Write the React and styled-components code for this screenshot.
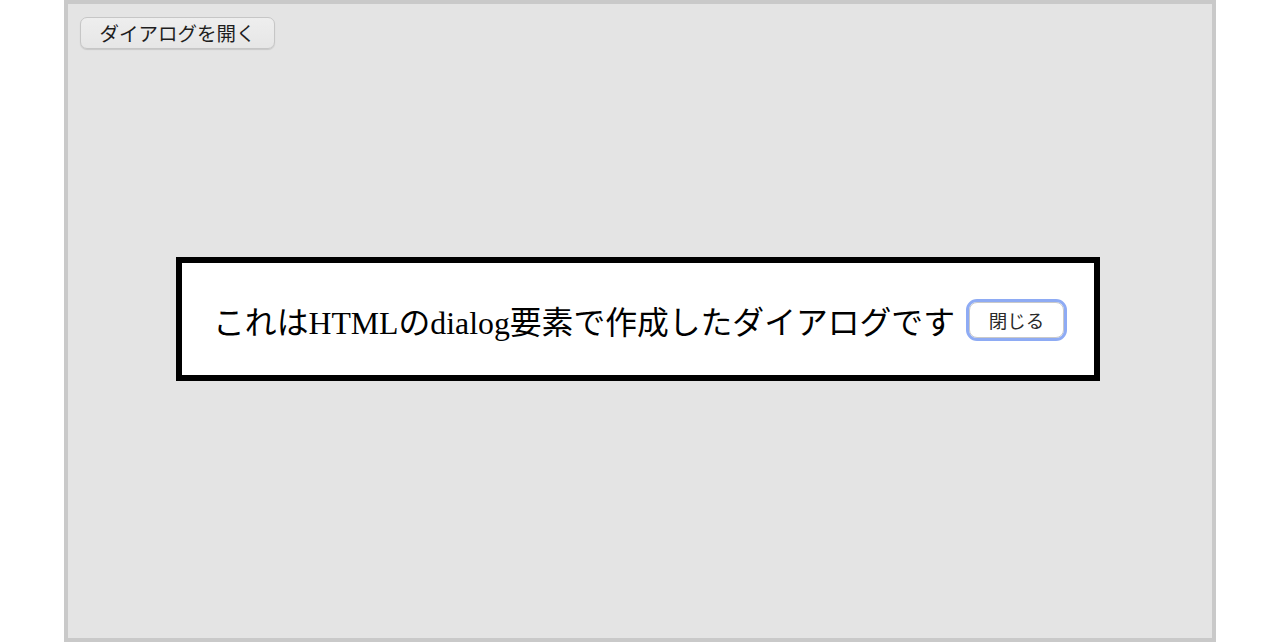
import React from 'react';
import styled, { createGlobalStyle } from 'styled-components';

const GlobalStyle = createGlobalStyle`
  html, body {
    margin: 0;
    padding: 0;
    background: #fff;
  }
  body {
    font-family: "Liberation Serif", "Noto Sans CJK JP", serif;
  }
`

const Frame = styled.div`
  position: relative;
  box-sizing: border-box;
  width: 1152px;
  height: 642px;
  margin: 0 auto;
  border: 4px solid #c9c9c9;
  background: #e4e4e4;
  padding: 13px 12px;
`

const OpenButton = styled.button`
  box-sizing: border-box;
  height: 32px;
  padding: 0 18.5px;
  border: 1px solid #c6c6c6;
  border-radius: 7px;
  background: linear-gradient(#eeeeee, #e6e6e6);
  box-shadow: 0 1px 1px rgba(0, 0, 0, 0.12);
  font-family: "Noto Sans CJK JP", sans-serif;
  font-size: 19.5px;
  line-height: 1;
  color: #1e1e1e;
`

// modal box, centred over the frame like a native <dialog>
const Dialog = styled.div`
  position: absolute;
  inset: 0 4px 4px 0;
  margin: auto;
  box-sizing: border-box;
  width: 924px;
  height: 124px;
  border: 6px solid #000;
  background: #fff;
  display: flex;
  align-items: center;
  justify-content: center;
  gap: 11px;
  padding: 2px 0 0 4px;
`

const Message = styled.p`
  margin: 0;
  font-family: "Liberation Serif", "Noto Sans CJK JP", serif;
  font-size: 31.8px;
  color: #000;
  white-space: nowrap;
`

const CloseButton = styled.button`
  box-sizing: border-box;
  width: 95px;
  height: 36px;
  margin: 0 3px;
  border: 1px solid #c9c9c9;
  border-radius: 8px;
  background: #fff;
  outline: 3px solid #8eabf4;
  outline-offset: 0;
  font-family: "Noto Sans CJK JP", sans-serif;
  font-size: 18.5px;
  line-height: 1;
  color: #2a2a2a;
`

export default function App() {
  return (
    <>
      <GlobalStyle />
      <Frame>
        <OpenButton>ダイアログを開く</OpenButton>
        <Dialog role="dialog">
          <Message>これはHTMLのdialog要素で作成したダイアログです</Message>
          <CloseButton>閉じる</CloseButton>
        </Dialog>
      </Frame>
    </>
  )
}
